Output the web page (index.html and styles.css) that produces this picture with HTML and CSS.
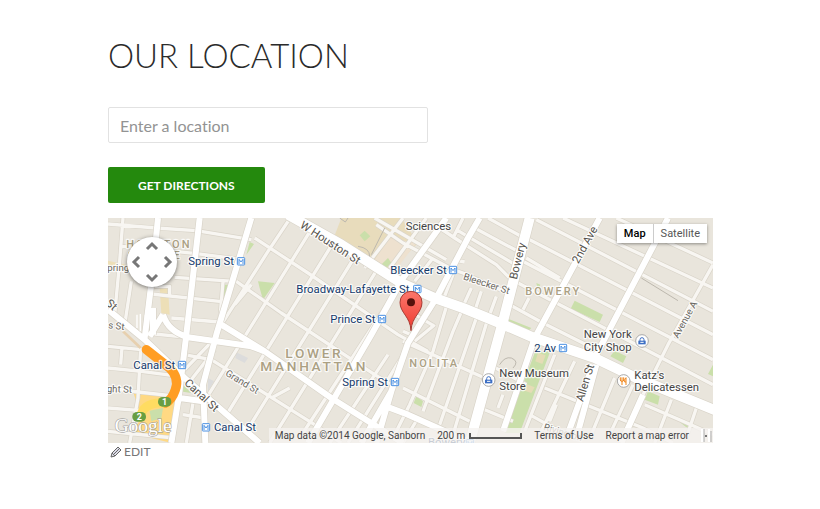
FILE: index.html
```html
<!DOCTYPE html>
<html lang="en">
<head>
<meta charset="utf-8">
<title>Our Location</title>
<link rel="stylesheet" href="styles.css">
</head>
<body>
<main class="page">
  <h1 class="title">Our Location</h1>
  <form class="directions">
    <input class="field" type="text" aria-label="Enter a location" placeholder="Enter a location">
    <button class="submit" type="button">Get Directions</button>
  </form>
  <section class="map" aria-label="Map">
    <svg class="canvas" viewBox="0 0 1815 675" preserveAspectRatio="xMidYMid slice">
      <defs>
        <g id="metro"><rect x="1" y="1" width="22" height="22" rx="2" fill="#fff" stroke="#4a90e2" stroke-width="3"/><path d="M6 20V6l6 8 6-8v14" fill="none" stroke="#4a90e2" stroke-width="3"/></g>
        <g id="shop"><circle r="19" fill="#fff" stroke="#a9a9a9" stroke-width="3"/><path d="M-11-1h22v11h-22z" fill="#3d6fc4"/><path d="M-6 0v-4a6 6 0 0 1 12 0v4" fill="none" stroke="#3d6fc4" stroke-width="3"/><path d="M-5 4h10" stroke="#fff" stroke-width="3"/></g>
        <g id="minor">
          <path d="M0 18 145 30 265 38 430 65M40 85 130 92M145 95 260 106 405 125M200 178 380 190M130 228 335 250M190 300 335 312M45 0 35 130 20 290M70 190 50 320M110 345 240 358M0 385 100 395M0 450 100 460 215 475M0 510 90 522 210 535M0 570 100 578M0 640 200 660M42 388 38 440M98 390 90 540 65 675M240 412 310 425 620 620 700 675M225 460 312 370M238 500 320 395M225 590 290 600M255 555 235 675M345 190 335 312M130 228 130 205 185 205 185 235"/>
          <path d="M540 10 480 100 340 320M606 40 300 533M672 80 359 585M738 120 417 637M804 160 485 675M850 240 575 660M440 60 600 165 870 350 960 400M385 190 520 285 800 470 850 500M430 200 380 260M905 380 720 675M840 410 665 675M930 600 885 675M490 540 545 510M800 0 1015 125M885 0 770 150"/>
          <g transform="translate(885)">
            <path d="M70 0-40 150M95 20 155 60 280 140 330 190M-80 20 0 75 150 155 180 165 325 230M160 35 345 145M215 30 345 100M255 0 360 58M180 0 150 60M35 190 90 120M150 170 115 260M205 210 180 265M235 220 215 280M280 235 260 290M135 250 90 400 20 560-30 660M180 270 150 340 60 580M225 285 110 620M255 300 150 650M0 370 100 415 250 482M0 510 200 610M40 292 95 325M35 370 95 320M0 340 35 355M150 125 185 132M360 275 378 240"/>
            <path d="M400 5 930 280M370 60 930 350M350 125 930 425M335 190 930 500M320 260 420 315 580 395M480 0 930 210M640 0 930 135M370 120 470 180M930 140 795 380 720 530M455 410 365 640M515 430 410 650M635 480 565 650M690 500 620 650M805 545 755 675M880 570 850 660M425 510 720 630 810 675M245 575 330 610M260 440 370 500M300 530 285 570M380 590 470 640M460 560 440 610M725 560 840 610 930 650"/>
          </g>
        </g>
        <g id="major">
          <path d="M150 0 132 180 110 360M275 0 235 350 212 540 190 675M430 0 325 350 285 500 292 675M0 275 110 365 230 480 455 675M340 320 470 400 670 540 885 675M165 290Q180 340 240 358L430 385 470 400M165 290 125 355M215 540 285 550M135 270V350"/>
          <path d="M1015 0 885 180 790 350 600 675M1115 0 1080 60 985 240 900 375 850 520 805 675M850 520 760 675M820 560 900 590 1090 675"/>
          <path transform="translate(885)" d="M590 0 395 360 300 640M795 0 580 410M570 440 490 660M580 440 520 660M720 530 655 675"/>
        </g>
        <g id="artery">
          <path d="M540-10 700 80 880 195 980 240 1065 270 1175 315 1275 358 1460 420 1585 480 1825 578M1265 0 1185 310 1085 675"/>
        </g>
      </defs>
      <rect width="1815" height="675" fill="#e9e5dc"/>
      <path d="M700 0H880L930 75 840 165 675 65z" fill="#e8dcbc"/>
      <path d="M845 60 925 75 860 160 800 125z" fill="#eee1cf"/>
      <path d="M770 38 787 55 770 70 755 52zM840 120 850 135 830 155 815 145z" fill="#cadfaa"/>
      <path d="M0 128 60 142V155L0 145zM155 210H180L185 290 160 285z" fill="#eddfb7"/>
      <path d="M450 190 500 195 465 245 455 210zM425 72 438 78 415 110zM345 200 362 200 342 285 336 280zM225 500 250 525 215 520z" fill="#cadfaa"/>
      <path d="M75 520 210 530 190 675 70 645 100 600z" fill="#ffd983"/>
      <path d="M125 578 165 570 160 600 130 610z" fill="#cadfaa"/>
      <path d="M385 403 420 420 410 435 382 420zM300 480 318 490 300 520z" fill="#dcdcdc"/>
      <g transform="translate(885)" fill="#cadfaa">
        <path d="M395 405 442 400 350 645 305 645zM515 248 600 290 590 312 503 272zM315 302 385 330 375 340 310 320zM635 398 670 415 660 435 622 415zM735 520 770 535 765 560 725 545zM40 535 60 550 55 567 32 555zM400 195 412 200 405 215zM930 440V475L915 468zM830 612 860 625 850 628z"/>
        <path d="M405 405 428 412 418 438 397 430zM370 498 395 508 385 525 365 518z" fill="#e5dcb6"/>
      </g>
      <use href="#minor" class="road minor-edge"/><use href="#minor" class="road minor"/>
      <use href="#major" class="road major-edge"/><use href="#artery" class="road artery-edge"/>
      <use href="#major" class="road major"/><use href="#artery" class="road artery"/>
      <path d="M87 290V330M97 288V340M112 290V345" fill="none" stroke="#fff" stroke-width="4"/>
      <path d="M45 340 98 390" fill="none" stroke="#e7d0af" stroke-width="8"/>
      <path d="M695 0 712 12 720 0M750 85Q785 90 785 115M830 30 790 110M1600 180 1710 248M1175 440Q1190 415 1210 420 1235 430 1215 450" class="path"/>
      <path d="M115 395 185 450Q215 480 202 515 192 545 172 555" fill="none" stroke="#ff9d23" stroke-width="28" stroke-linecap="round"/>
      <path d="M170 555Q105 550 96 600" fill="none" stroke="#ffdc61" stroke-width="26"/>
      <g fill="#689e43"><rect x="150" y="537" width="40" height="29" rx="14"/><rect x="73" y="582" width="41" height="29" rx="14"/></g>
      <g class="badge"><text x="170" y="561">1</text><text x="94" y="606">2</text></g>

      <g class="area">
        <text x="55" y="90" class="small-area">HOUSTON</text><text x="60" y="122" class="small-area">SQUARE</text>
        <text x="532" y="420" class="large-area">LOWER</text><text x="457" y="459" class="large-area">MANHATTAN</text>
        <text x="904" y="446" class="small-area">NOLITA</text><text x="1252" y="230" class="small-area">BOWERY</text>
      </g>
      <g class="street">
        <text transform="translate(574 27) rotate(33)" class="main-street">W Houston St</text>
        <text transform="translate(227 497) rotate(43)" class="main-street">Canal St</text>
        <text transform="translate(350 471) rotate(31)">Grand St</text>
        <text x="-2" y="160">pring</text>
        <text transform="translate(-8 258) rotate(43)" class="main-street">St</text>
        <text transform="translate(0 331) rotate(6)">s St</text>
        <text transform="translate(-4 522) rotate(2)">ght St</text>
        <text transform="translate(1064 184) rotate(18)">Bleecker St</text>
        <text transform="translate(1226 186) rotate(-76)" class="main-street">Bowery</text>
        <text transform="translate(1411 139) rotate(-61)" class="main-street">2nd Ave</text>
        <text transform="translate(1425 553) rotate(-73)" class="main-street">Allen St</text>
        <text transform="translate(1710 362) rotate(-61)">Avenue A</text>
        <text transform="translate(1305 635) rotate(17)">Rivington</text>
      </g>
      <g class="station">
        <text x="241" y="140">Spring St</text><text x="565" y="224">Broadway-Lafayette St</text>
        <text x="667" y="314">Prince St</text><text x="703" y="503">Spring St</text>
        <text x="76" y="452">Canal St</text><text x="318" y="638">Canal St</text>
        <text x="847" y="167">Bleecker St</text><text x="1279" y="401">2 Av</text><text x="960" y="684">Bowery</text>
      </g>
      <use href="#metro" x="387" y="118"/><use href="#metro" x="916" y="201"/><use href="#metro" x="810" y="291"/><use href="#metro" x="849" y="480"/><use href="#metro" x="210" y="429"/><use href="#metro" x="282" y="616"/><use href="#metro" x="1023" y="144"/><use href="#metro" x="1353" y="378"/><use href="#metro" x="1074" y="664"/>
      <g class="place">
        <text x="893" y="35">Sciences</text>
        <text x="1174" y="476">New Museum</text><text x="1174" y="515">Store</text>
        <text x="1571" y="359" text-anchor="end">New York</text><text x="1571" y="398" text-anchor="end">City Shop</text>
        <text x="1579" y="482">Katz's</text><text x="1579" y="518">Delicatessen</text>
      </g>
      <use href="#shop" x="1142" y="486"/><use href="#shop" x="1602" y="369"/>
      <circle cx="1547" cy="489" r="19" fill="#fff" stroke="#a9a9a9" stroke-width="3"/>
      <path d="M1537 478v8q0 4 5 4t5-4v-8M1542 478v23M1554 501v-22q-5 2-4 13h4" fill="none" stroke="#f08519" stroke-width="3"/>
      <text x="20" y="642" class="logo">Google</text>
      <path d="M909 338C907 295 876 285 876 253A33 33 0 0 1 942 253C942 285 911 295 909 338z" fill="url(#pin)" stroke="#a63a32" stroke-width="3"/>
      <circle cx="909" cy="253" r="12" fill="#56110c"/>
      <linearGradient id="pin" x2="0" y2="1"><stop stop-color="#fc766b"/><stop offset="1" stop-color="#ee3c30"/></linearGradient>
    </svg>
    <div class="pan">
      <button type="button" class="up" aria-label="Pan up"><svg viewBox="0 0 14 14"><path d="M2 10l5-5 5 5"/></svg></button>
      <button type="button" class="left" aria-label="Pan left"><svg viewBox="0 0 14 14"><path d="M10 2L5 7l5 5"/></svg></button>
      <button type="button" class="right" aria-label="Pan right"><svg viewBox="0 0 14 14"><path d="M4 2l5 5-5 5"/></svg></button>
      <button type="button" class="down" aria-label="Pan down"><svg viewBox="0 0 14 14"><path d="M2 4l5 5 5-5"/></svg></button>
    </div>
    <div class="types">
      <button type="button" class="type active">Map</button>
      <button type="button" class="type">Satellite</button>
    </div>
    <div class="legal">
      <span>Map data ©2014 Google, Sanborn</span>
      <span class="scale">200 m <i class="bar"></i></span>
      <a href="#terms">Terms of Use</a>
      <a href="#report">Report a map error</a>
      <svg class="handle" viewBox="0 0 12 13"><path d="M0 0h3v13H0zM7 0h2v13H7z" fill="#fff"/><path d="M3 0v13M10 2v11" stroke="#aaa"/><path d="M4 6h2v2H4z" fill="#777"/></svg>
    </div>
  </section>
  <a class="edit" href="#edit"><svg viewBox="0 0 12 12"><path d="M1 11l1-4 6-6 3 3-6 6z" fill="#dcdce8"/><path d="M2 7l3 3M4 8l5-5"/></svg>Edit</a>
</main>
</body>
</html>
```
FILE: styles.css
```css
* { box-sizing: border-box; }
body { margin: 0; background: #fff; font-family: Lato, sans-serif; }
.page { padding: 37px 107px 40px 108px; }
.title { margin: 0 0 34px; color: #2b2b2b; font-size: 33px; font-weight: 300; line-height: 36px; text-transform: uppercase; }
.directions { display: flex; flex-direction: column; align-items: flex-start; gap: 24px; margin-bottom: 15px; }
.field { width: 320px; max-width: 100%; height: 36px; padding: 0 11px; border: 1px solid #e2e2e2; border-radius: 2px; color: #2b2b2b; font: 16px Lato, sans-serif; font-variant-ligatures: none; }
.field::placeholder { color: #939393; }
.submit { height: 36px; padding: 0 30px; border: 0; border-radius: 2px; background: #24890d; color: #fff; font: 700 12px Lato, sans-serif; text-transform: uppercase; }

.map { position: relative; aspect-ratio: 605 / 225; overflow: hidden; font-family: Roboto, sans-serif; }
.canvas { display: block; width: 100%; height: 100%; }
.road { fill: none; stroke-linejoin: round; }
.minor-edge { stroke: #d9d4c9; stroke-width: 14px; }
.minor { stroke: #f8f6f2; stroke-width: 10px; }
.major-edge { stroke: #d9d4c9; stroke-width: 22px; }
.major { stroke: #fff; stroke-width: 18px; }
.artery-edge { stroke: #d9d4c9; stroke-width: 34px; }
.artery { stroke: #fff; stroke-width: 30px; }
.path { fill: none; stroke: #bdb8ae; stroke-width: 3px; }
.canvas text { paint-order: stroke; stroke: #fff; stroke-width: 7px; stroke-linejoin: round; stroke-opacity: 0.8; }
.station { fill: #14396b; font-size: 34px; }
.place { fill: #444; font-size: 34px; }
.street { fill: #6b6861; font-size: 29px; }
.main-street { fill: #55524c; font-size: 34px; }
.area { fill: #aba083; font-weight: 500; }
.small-area { font-size: 33px; letter-spacing: 6px; }
.large-area { font-size: 41px; letter-spacing: 8px; }
.canvas .badge text { fill: #fff; stroke: none; font-size: 27px; font-weight: 700; text-anchor: middle; }
.canvas .logo { fill: #fff; stroke: #999; stroke-width: 4px; font-family: "Liberation Serif", serif; font-size: 58px; }

.pan { position: absolute; top: 19px; left: 19px; display: grid; grid-template: 18px 14px 18px / 18px 14px 18px; width: 50px; height: 50px; border-radius: 50%; background: #fff; box-shadow: 0 1px 4px rgba(0, 0, 0, 0.5); }
.pan button { display: grid; place-items: center; padding: 0; border: 0; background: none; }
.pan svg { width: 14px; height: 14px; fill: none; stroke: #777; stroke-width: 3px; }
.up { grid-area: 1 / 2; }
.left { grid-area: 2 / 1; }
.right { grid-area: 2 / 3; }
.down { grid-area: 3 / 2; }

.types { position: absolute; top: 6px; right: 6px; display: flex; background: #fff; box-shadow: 0 1px 3px rgba(0, 0, 0, 0.4); }
.type { height: 19px; padding: 0 7px; border: 0; background: none; color: #565656; font: 11px Roboto, sans-serif; }
.type + .type { border-left: 1px solid #ccc; }
.type.active { color: #000; font-weight: 500; }

.legal { position: absolute; right: 0; bottom: 0; display: flex; align-items: center; gap: 12px; height: 15px; padding-left: 6px; background: rgba(245, 243, 240, 0.8); color: #444; font-size: 10px; white-space: nowrap; }
.legal a { color: #444; text-decoration: none; }
.scale { display: flex; align-items: center; gap: 4px; }
.bar { width: 53px; height: 6px; border: 2px solid #555; border-top: 0; }
.handle { width: 12px; height: 13px; }

.edit { display: inline-flex; align-items: center; gap: 2px; padding-left: 2px; color: #767676; font-size: 12px; line-height: 18px; text-decoration: none; text-transform: uppercase; vertical-align: top; }
.edit svg { width: 12px; height: 12px; fill: none; stroke: #666; }
```
